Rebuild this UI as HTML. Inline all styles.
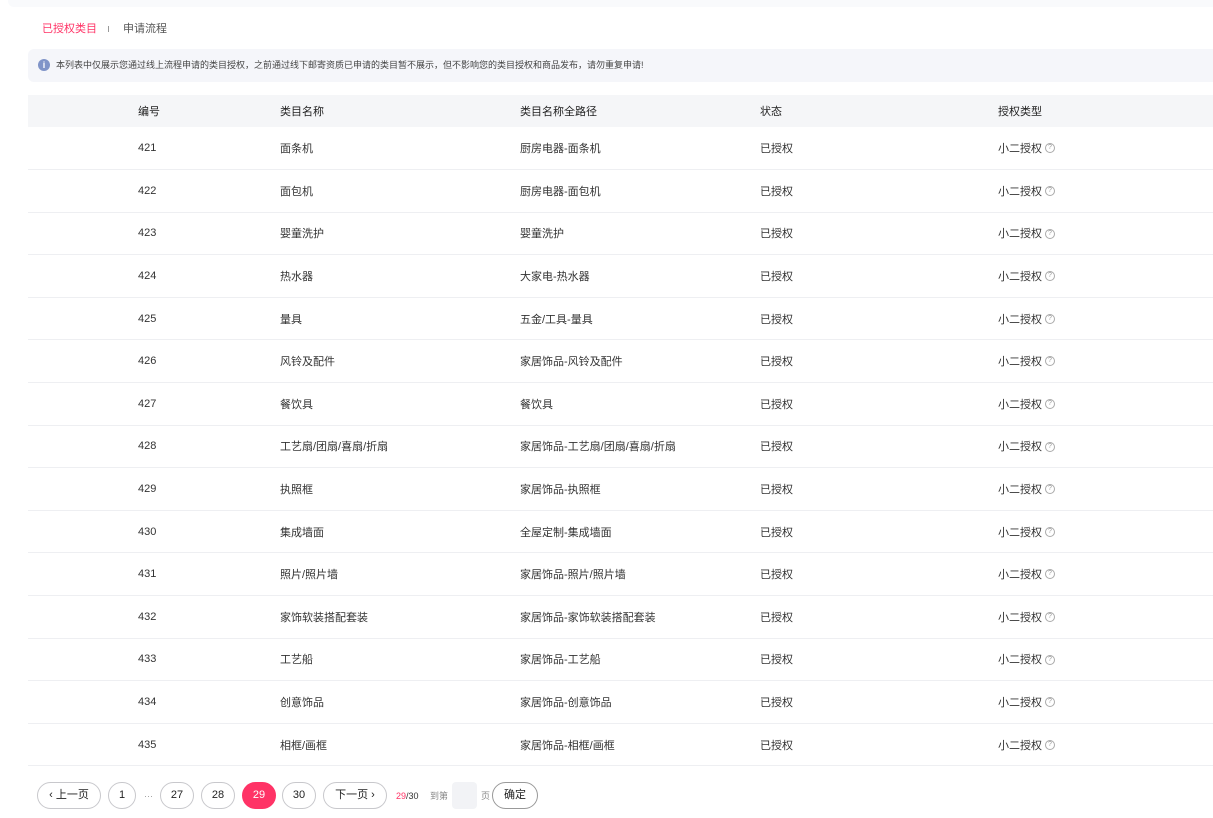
<!DOCTYPE html>
<html><head><meta charset="utf-8"><style>
*{margin:0;padding:0;box-sizing:border-box}
body{width:1213px;height:818px;background:#fff;font-family:"Liberation Sans","Noto Sans CJK SC",sans-serif;color:#333;position:relative;overflow:hidden}
.top{position:absolute;left:8px;top:-10px;width:1220px;height:17px;background:#f9fafc;border-radius:6px}
.tabs{position:absolute;top:22px;left:42px;font-size:11px;line-height:14px}
.tabs .a{color:#ff3366}
.tabs .sep{display:inline-block;width:1px;height:6px;background:#999;margin:0 14px 0 11px;vertical-align:middle}
.tabs .b{color:#555}
.info{position:absolute;left:28px;top:49px;width:1190px;height:33px;background:#f5f6fa;border-radius:6px;font-size:9px;color:#444;line-height:33px;padding-left:28px}
.info i{position:absolute;left:10px;top:10px;width:12px;height:12px;border-radius:50%;background:#8094c8;color:#fff;font-style:normal;font-size:9px;line-height:12px;text-align:center;font-weight:bold}
table{position:absolute;left:28px;top:95px;width:1190px;border-collapse:collapse;font-size:11px}
th{background:#f5f6f8;height:32px;font-weight:normal;text-align:left;color:#222}
td{height:42.6px;border-bottom:1px solid #eeeff2;color:#333}
th:first-child,td:first-child{padding-left:110px;width:252px}
.c2{width:240px}.c3{width:240px}.c4{width:238px}
.q{display:inline-block;width:10px;height:10px;border:1px solid #aaa;border-radius:50%;font-size:7px;line-height:8px;text-align:center;color:#999;margin-left:3px;vertical-align:middle;position:relative;top:-1px}
.pg{position:absolute;top:782px;height:27px;border:1px solid #c8c8cc;border-radius:14px;font-size:11px;line-height:25px;text-align:center;color:#222;background:#fff}
.pg.on{background:#ff3366;border-color:#ff3366;color:#fff}
.t{position:absolute;top:789px;font-size:9px;color:#888;line-height:14px}
</style></head><body>
<div class="top"></div>
<div class="tabs"><span class="a">已授权类目</span><span class="sep"></span><span class="b">申请流程</span></div>
<div class="info"><i>i</i>本列表中仅展示您通过线上流程申请的类目授权，之前通过线下邮寄资质已申请的类目暂不展示，但不影响您的类目授权和商品发布，请勿重复申请!</div>
<table>
<tr><th>编号</th><th class="c2">类目名称</th><th class="c3">类目名称全路径</th><th class="c4">状态</th><th>授权类型</th></tr>
<tr><td>421</td><td>面条机</td><td>厨房电器-面条机</td><td>已授权</td><td>小二授权<span class="q">?</span></td></tr>
<tr><td>422</td><td>面包机</td><td>厨房电器-面包机</td><td>已授权</td><td>小二授权<span class="q">?</span></td></tr>
<tr><td>423</td><td>婴童洗护</td><td>婴童洗护</td><td>已授权</td><td>小二授权<span class="q">?</span></td></tr>
<tr><td>424</td><td>热水器</td><td>大家电-热水器</td><td>已授权</td><td>小二授权<span class="q">?</span></td></tr>
<tr><td>425</td><td>量具</td><td>五金/工具-量具</td><td>已授权</td><td>小二授权<span class="q">?</span></td></tr>
<tr><td>426</td><td>风铃及配件</td><td>家居饰品-风铃及配件</td><td>已授权</td><td>小二授权<span class="q">?</span></td></tr>
<tr><td>427</td><td>餐饮具</td><td>餐饮具</td><td>已授权</td><td>小二授权<span class="q">?</span></td></tr>
<tr><td>428</td><td>工艺扇/团扇/喜扇/折扇</td><td>家居饰品-工艺扇/团扇/喜扇/折扇</td><td>已授权</td><td>小二授权<span class="q">?</span></td></tr>
<tr><td>429</td><td>执照框</td><td>家居饰品-执照框</td><td>已授权</td><td>小二授权<span class="q">?</span></td></tr>
<tr><td>430</td><td>集成墙面</td><td>全屋定制-集成墙面</td><td>已授权</td><td>小二授权<span class="q">?</span></td></tr>
<tr><td>431</td><td>照片/照片墙</td><td>家居饰品-照片/照片墙</td><td>已授权</td><td>小二授权<span class="q">?</span></td></tr>
<tr><td>432</td><td>家饰软装搭配套装</td><td>家居饰品-家饰软装搭配套装</td><td>已授权</td><td>小二授权<span class="q">?</span></td></tr>
<tr><td>433</td><td>工艺船</td><td>家居饰品-工艺船</td><td>已授权</td><td>小二授权<span class="q">?</span></td></tr>
<tr><td>434</td><td>创意饰品</td><td>家居饰品-创意饰品</td><td>已授权</td><td>小二授权<span class="q">?</span></td></tr>
<tr><td>435</td><td>相框/画框</td><td>家居饰品-相框/画框</td><td>已授权</td><td>小二授权<span class="q">?</span></td></tr>
</table>
<div class="pg" style="left:37px;width:64px">‹ 上一页</div>
<div class="pg" style="left:108px;width:28px">1</div>
<div class="t" style="left:144px;color:#999">···</div>
<div class="pg" style="left:160px;width:34px">27</div>
<div class="pg" style="left:201px;width:34px">28</div>
<div class="pg on" style="left:242px;width:34px">29</div>
<div class="pg" style="left:282px;width:34px">30</div>
<div class="pg" style="left:323px;width:64px">下一页 ›</div>
<div class="t" style="left:396px;color:#333"><span style="color:#ff3366">29</span>/30</div>
<div class="t" style="left:430px">到第</div>
<div style="position:absolute;left:452px;top:782px;width:25px;height:27px;background:#f2f3f6;border-radius:4px"></div>
<div class="t" style="left:481px">页</div>
<div class="pg" style="left:492px;width:46px;border-color:#999">确定</div>
</body></html>
